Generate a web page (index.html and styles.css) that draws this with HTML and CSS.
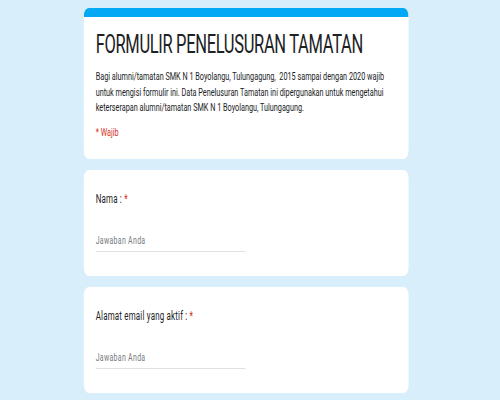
FILE: index.html
```html
<!DOCTYPE html>
<html lang="id">
<head>
<meta charset="utf-8">
<title>Formulir Penelusuran Tamatan</title>
<link rel="stylesheet" href="styles.css">
</head>
<body>
<div class="page">
  <main class="form">
    <section class="card header-card">
      <div class="bar"></div>
      <div class="card-body">
        <h1 class="title">FORMULIR PENELUSURAN TAMATAN</h1>
        <p class="desc">Bagi alumni/tamatan SMK N 1 Boyolangu, Tulungagung,&nbsp; 2015 sampai dengan 2020 wajib untuk mengisi formulir ini. Data Penelusuran Tamatan ini dipergunakan untuk mengetahui keterserapan alumni/tamatan SMK N 1 Boyolangu, Tulungagung.</p>
        <p class="required">* Wajib</p>
      </div>
    </section>
    <section class="card question">
      <div class="label">Nama : <span class="star">*</span></div>
      <div class="answer">Jawaban Anda</div>
    </section>
    <section class="card question">
      <div class="label">Alamat email yang aktif : <span class="star">*</span></div>
      <div class="answer">Jawaban Anda</div>
    </section>
  </main>
</div>
</body>
</html>
```
FILE: styles.css
```css
html, body {
  margin: 0;
  padding: 0;
  overflow: hidden;
}
body {
  background: #d8eefb;
  font-family: "Roboto", "Liberation Sans", sans-serif;
  color: #202124;
  height: 400px;
}
/* the reference is horizontally condensed: lay out wide, then squeeze */
.page {
  width: 758px;
  transform: scaleX(0.66);
  transform-origin: 0 0;
}
.form {
  width: 492px;
  margin-left: 127px;
  padding-top: 8px;
  display: flex;
  flex-direction: column;
  gap: 11px;
}
.card {
  background: #ffffff;
  border-radius: 8px;
  overflow: hidden;
}
.bar {
  height: 9px;
  background: #03a9f4;
}
.card-body {
  padding: 12px 18px 18px 18px;
}
.title {
  margin: 0;
  font-weight: 400;
  font-size: 25px;
  line-height: 32px;
  letter-spacing: -0.5px;
  color: #202124;
  white-space: nowrap;
}
.desc {
  margin: 8px 0 0 0;
  font-size: 11px;
  line-height: 15.5px;
  color: #202124;
}
.required {
  margin: 9.5px 0 0 0;
  font-size: 11px;
  line-height: 16px;
  color: #d93025;
}
.question {
  height: 106px;
  box-sizing: border-box;
  padding: 21px 18px 0 18px;
}
.label {
  font-size: 12px;
  line-height: 16px;
  letter-spacing: 0.3px;
  color: #202124;
}
.star {
  color: #d93025;
}
.answer {
  margin-top: 27px;
  width: 227px;
  font-size: 10.5px;
  line-height: 14px;
  letter-spacing: 0.5px;
  color: #757a80;
  padding-bottom: 3px;
  border-bottom: 1px solid #e0e0e0;
}
```
